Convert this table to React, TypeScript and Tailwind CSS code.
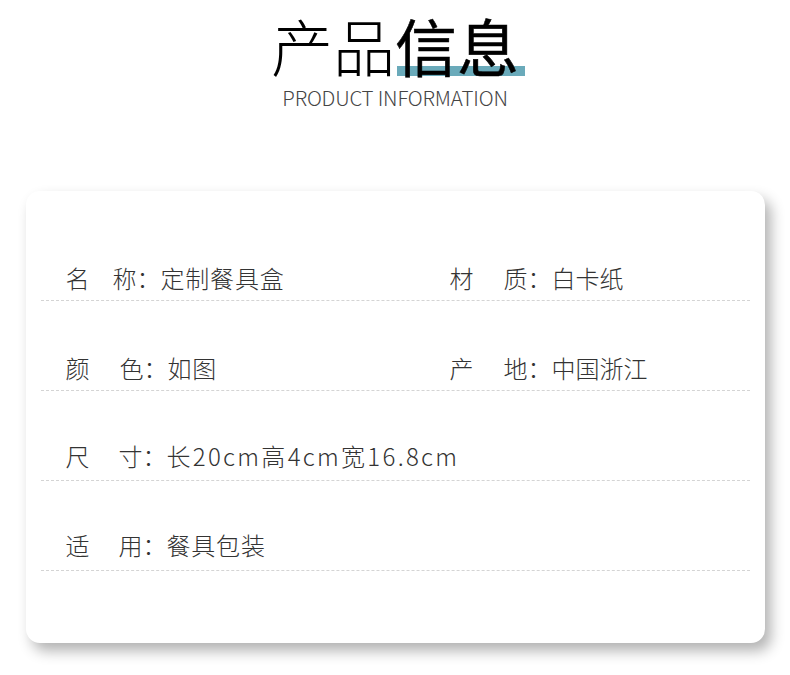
import React from "react";

const font = { fontFamily: '"Noto Sans CJK SC", "Noto Sans", sans-serif' };

function Label({ a, b, w }: { a: string; b: string; w: string }) {
  return (
    <span className="flex items-center">
      <span className={w}>{a}</span>
      <span>{b}</span>
      <span className="w-[24px]">：</span>
    </span>
  );
}

export default function App() {
  const rows: { l: [string, string, string]; r?: [string, string, string]; w: string; t: string; pb: string }[] = [
    { l: ["名", "称", "定制餐具盒"], r: ["材", "质", "白卡纸"], w: "w-[47px]", t: "tracking-[0.8px]", pb: "pb-[10px]" },
    { l: ["颜", "色", "如图"], r: ["产", "地", "中国浙江"], w: "w-[54px]", t: "tracking-[0.8px]", pb: "pb-[10px]" },
    { l: ["尺", "寸", "长20cm高4cm宽16.8cm"], w: "w-[53px]", t: "tracking-[2.3px]", pb: "pb-[12px]" },
    { l: ["适", "用", "餐具包装"], w: "w-[53px]", t: "tracking-[0.8px]", pb: "pb-[13px]" },
  ];
  return (
    <div className="w-[790px] h-[675px] bg-white overflow-hidden" style={font}>
      <div className="flex flex-col items-center pt-[14px]">
        <div className="flex text-[62px] leading-[62px] text-black">
          <span className="block font-light">产品</span>
          <span className="relative block font-normal [-webkit-text-stroke:0.5px_#000]">
            <span className="absolute left-[2px] right-[-6px] top-[52px] h-[10px] bg-[#6aaaba]" />
            <span className="relative">信息</span>
          </span>
        </div>
        <div className="mt-[9px] text-[20.5px] leading-[24px] font-light text-[#444] tracking-[-0.2px]">
          PRODUCT INFORMATION
        </div>
      </div>
      <div className="mt-[82px] mx-auto w-[739px] h-[452px] bg-white rounded-[14px] shadow-[6px_8px_14px_rgba(0,0,0,0.3)] px-[15px] pt-[20px]">
        {rows.map((row, i) => (
          <div
            key={i}
            className={`h-[90px] flex items-end ${row.pb} border-b border-dashed border-[#d4d4d4] text-[24px] leading-[24px] font-light text-[#333] whitespace-nowrap`}
          >
            <div className="w-[409px] shrink-0 pl-[25px] flex">
              <Label a={row.l[0]} b={row.l[1]} w={row.w} />
              <span className={row.t}>{row.l[2]}</span>
            </div>
            {row.r && (
              <div className="flex">
                <Label a={row.r[0]} b={row.r[1]} w="w-[54px]" />
                <span>{row.r[2]}</span>
              </div>
            )}
          </div>
        ))}
      </div>
    </div>
  );
}
